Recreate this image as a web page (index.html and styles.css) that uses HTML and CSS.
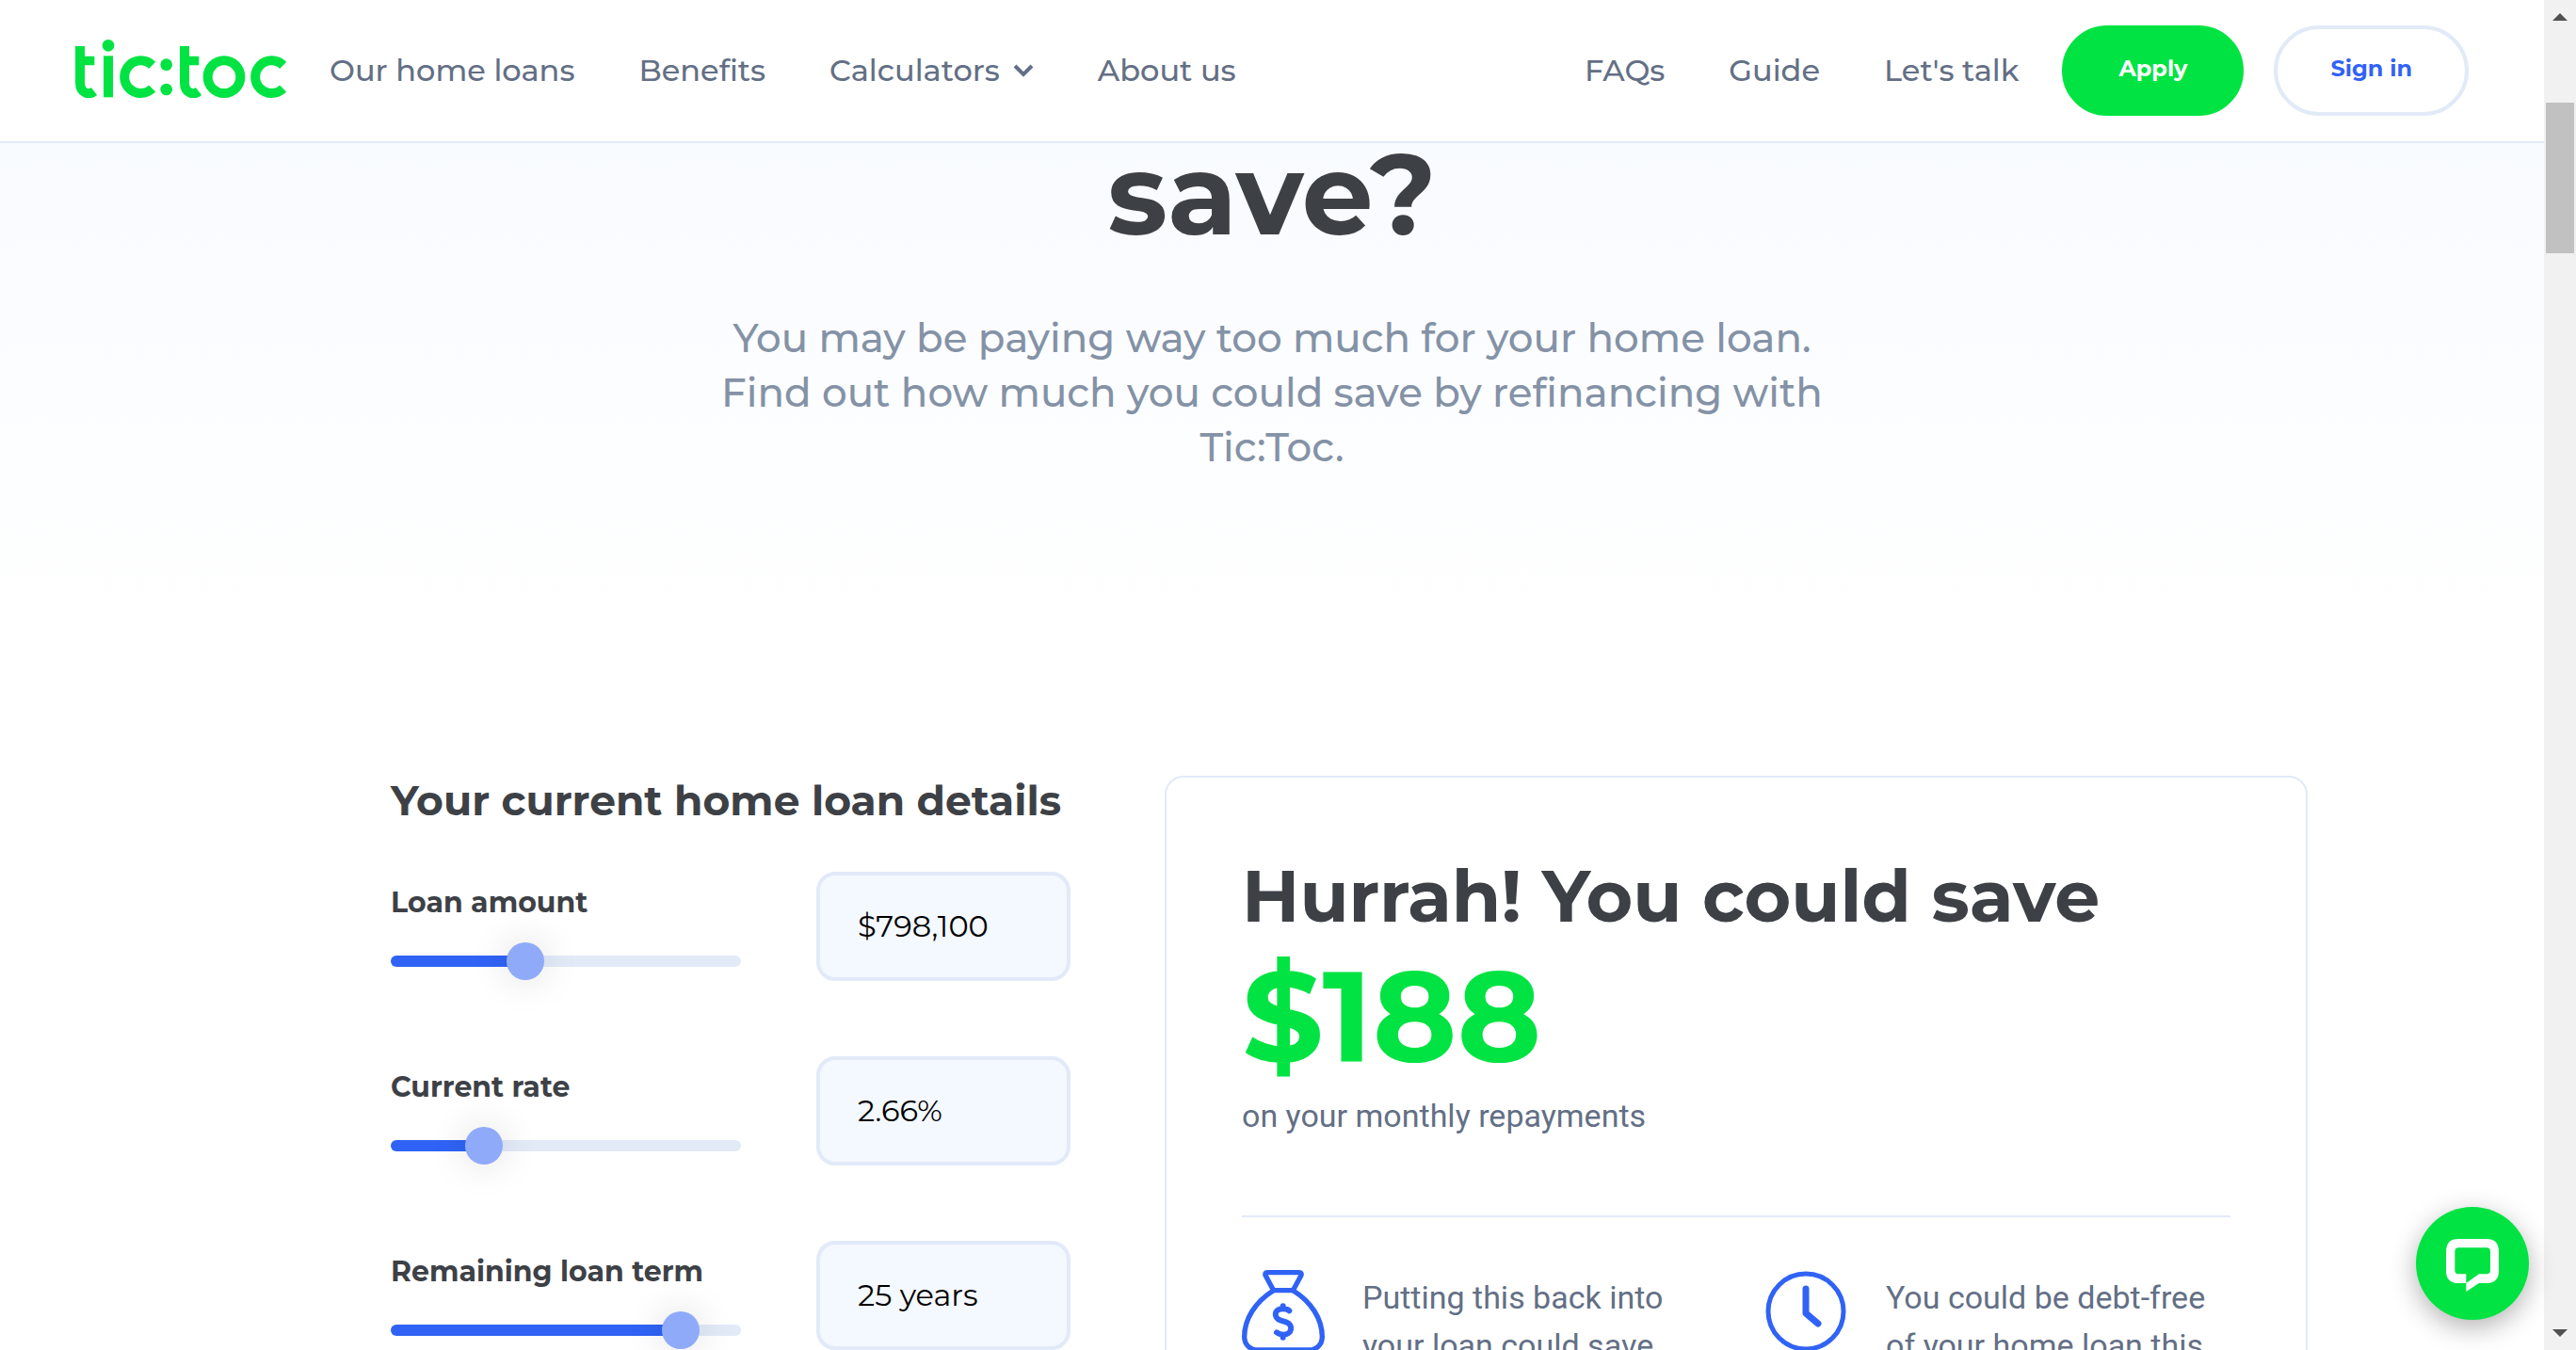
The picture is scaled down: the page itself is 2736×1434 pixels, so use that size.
FILE: index.html
```html
<!DOCTYPE html>
<html lang="en">
<head>
<meta charset="utf-8">
<title>Refinance calculator | Tic:Toc</title>
<link rel="stylesheet" href="styles.css">
</head>
<body>
<div class="page">
  <header class="header">
    <a class="logo" href="#" aria-label="tic:toc">
      <svg viewBox="60 66 672 186" aria-hidden="true">
        <g fill="none" stroke="currentColor" stroke-width="30">
          <path d="M75 87V203C75 233 100 247 120 231"/>
          <path d="M165 118V250"/>
          <path d="M305 148A52 52 0 1 0 305 222"/>
          <path d="M408 87V203C408 233 433 247 453 231"/>
          <circle cx="534" cy="185" r="52"/>
          <path d="M722 148A52 52 0 1 0 722 222"/>
        </g>
        <g fill="currentColor">
          <path d="M88 119H121V148H88zM421 119H454V148H421z"/>
          <circle cx="165" cy="85" r="19"/>
          <circle cx="350" cy="146" r="19"/>
          <circle cx="350" cy="225" r="19"/>
        </g>
      </svg>
    </a>
    <nav class="nav" aria-label="Main">
      <a href="#">Our home loans</a>
      <a href="#">Benefits</a>
      <a href="#">Calculators
        <svg class="chevron" viewBox="0 0 22 14" aria-hidden="true"><path d="M2 2L11 11L20 2"/></svg>
      </a>
      <a href="#">About us</a>
    </nav>
    <nav class="nav nav-help" aria-label="Help">
      <a href="#">FAQs</a>
      <a href="#">Guide</a>
      <a href="#">Let's talk</a>
    </nav>
    <div class="actions">
      <button class="btn btn-primary" type="button">Apply</button>
      <button class="btn btn-outline" type="button">Sign in</button>
    </div>
  </header>

  <main>
    <section class="hero">
      <h1>save?</h1>
      <p>You may be paying way too much for your home loan. Find out how much you could save by refinancing with Tic:Toc.</p>
    </section>

    <section class="calculator">
      <form class="details">
        <h2>Your current home loan details</h2>
        <div class="row">
          <div class="field">
            <label for="amount-range">Loan amount</label>
            <input class="slider" id="amount-range" type="range" min="0" max="1000" value="371" style="--value: 0.371">
          </div>
          <input class="value" type="text" value="$798,100" aria-label="Loan amount value">
        </div>
        <div class="row">
          <div class="field">
            <label for="rate-range">Current rate</label>
            <input class="slider" id="rate-range" type="range" min="0" max="1000" value="238" style="--value: 0.238">
          </div>
          <input class="value" type="text" value="2.66%" aria-label="Current rate value">
        </div>
        <div class="row">
          <div class="field">
            <label for="term-range">Remaining loan term</label>
            <input class="slider" id="term-range" type="range" min="0" max="1000" value="867" style="--value: 0.867">
          </div>
          <input class="value" type="text" value="25 years" aria-label="Remaining loan term value">
        </div>
      </form>

      <div class="card">
        <h2>Hurrah! You could save</h2>
        <p class="saving">$188</p>
        <p class="note">on your monthly repayments</p>
        <div class="benefits">
          <div class="benefit">
            <svg viewBox="57 57 264 264" fill="none" stroke="currentColor" stroke-width="16" stroke-linejoin="round" stroke-linecap="round" aria-hidden="true">
              <path d="M139 65H239Q250 65 245 76L220 122H158L133 76Q128 65 139 65z"/>
              <path d="M158 122C100 158 65 213 65 270C65 295 84 312 106 312H272C294 312 313 295 313 270C313 213 278 158 220 122"/>
              <path d="M208 187C202 181 196 181 187 181C157 181 159 211 179 217L198 223C222 231 217 263 190 263C180 263 175 262 168 256M188 172V180M188 264V272" stroke-width="18"/>
            </svg>
            <p>Putting this back into your loan could save</p>
          </div>
          <div class="benefit">
            <svg viewBox="0 0 88 88" fill="none" stroke="currentColor" aria-hidden="true">
              <circle cx="43" cy="44" r="40" stroke-width="5"/>
              <path d="M43 20V46L56 57" stroke-width="7" stroke-linecap="round" stroke-linejoin="round"/>
            </svg>
            <p>You could be debt-free of your home loan this</p>
          </div>
        </div>
      </div>
    </section>
  </main>

  <button class="chat" type="button" aria-label="Open chat">
    <svg viewBox="174 168 168 168" aria-hidden="true">
      <path fill="#fff" fill-rule="evenodd" d="M214 168H302Q342 168 342 208V269Q342 309 302 309H279L238 336V309H214Q174 309 174 269V208Q174 168 214 168zM214 196Q202 196 202 208V268Q202 280 214 280H238V309L279 280H303Q315 280 315 268V208Q315 196 303 196z"/>
    </svg>
  </button>
</div>

<div class="scrollbar" aria-hidden="true">
  <svg viewBox="0 0 16 8"><path d="M8 0L16 8H0z"/></svg>
  <div class="thumb"></div>
  <svg class="down" viewBox="0 0 16 8"><path d="M0 0H16L8 8z"/></svg>
</div>
</body>
</html>
```
FILE: styles.css
```css
:root {
  --ink: #3d4146;
  --slate: #636f85;
  --green: #00e342;
  --blue: #3063f5;
  --line: #e2eaf8;
}

* {
  box-sizing: border-box;
}

body {
  display: grid;
  grid-template-columns: 1fr 34px;
  height: 100vh;
  margin: 0;
  overflow: hidden;
  background: #fff;
  color: var(--ink);
  font-family: Montserrat, Inter, sans-serif;
  font-variant-ligatures: none;
}

h1, h2, p {
  margin: 0;
}

a {
  color: inherit;
  text-decoration: none;
}

.page {
  min-width: 0;
  height: 100vh;
  overflow: hidden;
}

/* Header */

.header {
  display: flex;
  align-items: center;
  padding: 27px 80px;
  border-bottom: 2px solid var(--line);
}

.logo {
  margin-right: 46px;
  padding-bottom: 4px;
  color: var(--green);
}

.logo svg {
  display: block;
  width: 224px;
  height: 62px;
}

.nav {
  display: flex;
  gap: 68px;
  color: var(--slate);
  font-size: 32px;
  font-weight: 500;
  line-height: 40px;
  white-space: nowrap;
}

.nav a {
  display: flex;
  align-items: center;
  gap: 14px;
}

.nav-help {
  margin-left: auto;
}

.chevron {
  width: 22px;
  height: 14px;
  fill: none;
  stroke: currentColor;
  stroke-width: 4;
}

.actions {
  display: flex;
  gap: 32px;
  margin-left: 46px;
}

.btn {
  height: 96px;
  padding: 0 56px 6px;
  border: 4px solid var(--green);
  border-radius: 48px;
  font: inherit;
  font-size: 24px;
  font-weight: 700;
}

.btn-primary {
  background: var(--green);
  color: #fff;
}

.btn-outline {
  border-color: var(--line);
  background: #fff;
  color: var(--blue);
}

/* Hero */

.hero {
  padding-bottom: 160px;
  background: linear-gradient(#f8fbff, #fff);
  text-align: center;
}

.hero h1 {
  font-size: 120px;
  line-height: 108px;
}

.hero p {
  max-width: 1200px;
  margin: 70px auto 0;
  color: #8492a6;
  font-size: 42px;
  font-weight: 500;
  line-height: 58px;
}

/* Calculator */

.calculator {
  display: grid;
  grid-template-columns: 722fr 1214fr;
  gap: 100px;
  align-items: start;
  padding: 160px 251px 80px 415px;
}

.details {
  display: grid;
  gap: 80px;
}

.details h2 {
  margin-bottom: -30px;
  font-size: 44px;
  line-height: 52px;
  white-space: nowrap;
}

.row {
  display: flex;
  gap: 80px;
}

.field {
  display: flex;
  flex: 1;
  flex-direction: column;
  gap: 22px;
  min-width: 0;
  padding-top: 13px;
}

.field label {
  font-size: 30px;
  font-weight: 700;
  line-height: 40px;
}

.slider {
  width: 100%;
  height: 40px;
  margin: 0;
  appearance: none;
  background: none;
}

.slider::-webkit-slider-runnable-track {
  height: 12px;
  border-radius: 6px;
  background: linear-gradient(
    to right,
    var(--blue) calc(20px + (100% - 40px) * var(--value)),
    var(--line) calc(20px + (100% - 40px) * var(--value))
  );
}

.slider::-webkit-slider-thumb {
  width: 40px;
  height: 40px;
  margin-top: -14px;
  appearance: none;
  border-radius: 50%;
  background: #90aafa;
  box-shadow: 0 0 40px rgba(0, 0, 0, 0.15);
}

.value {
  width: 270px;
  height: 116px;
  padding: 0 40px 2px;
  border: 4px solid var(--line);
  border-radius: 20px;
  background: #f4f8ff;
  color: #000;
  font: inherit;
  font-size: 32px;
  font-weight: 400;
}

/* Result card */

.card {
  padding: 80px;
  border: 2px solid var(--line);
  border-radius: 20px;
}

.card h2 {
  font-size: 76px;
  line-height: 92px;
  white-space: nowrap;
}

.saving {
  margin-bottom: 2px;
  color: var(--green);
  font-size: 136px;
  font-weight: 700;
  line-height: 160px;
}

.note,
.benefit p {
  color: var(--slate);
  font-family: Roboto, sans-serif;
  font-size: 34px;
  line-height: 51px;
}

.benefits {
  display: grid;
  grid-template-columns: 1fr 1fr;
  gap: 62px;
  margin-top: 80px;
  padding-top: 56px;
  border-top: 2px solid var(--line);
}

.benefit {
  display: flex;
  gap: 40px;
}

.benefit svg {
  flex: none;
  width: 88px;
  height: 88px;
  color: var(--blue);
}

.benefit p {
  padding-top: 4px;
}

/* Chat launcher floats over the page */

.chat {
  position: fixed;
  right: 50px;
  bottom: 32px;
  display: grid;
  place-items: center;
  width: 120px;
  height: 120px;
  padding: 4px 0 0;
  border: 0;
  border-radius: 50%;
  background: var(--green);
  box-shadow: 0 8px 28px rgba(0, 0, 0, 0.3);
}

.chat svg {
  width: 56px;
  height: 56px;
}

/* Scrollbar */

.scrollbar {
  display: flex;
  flex-direction: column;
  align-items: center;
  padding: 14px 2px;
  background: #f1f1f1;
}

.scrollbar svg {
  width: 16px;
  height: 8px;
  fill: #505050;
}

.scrollbar .down {
  margin-top: auto;
}

.thumb {
  width: 30px;
  height: 160px;
  margin-top: 87px;
  background: #c1c1c1;
}
```
